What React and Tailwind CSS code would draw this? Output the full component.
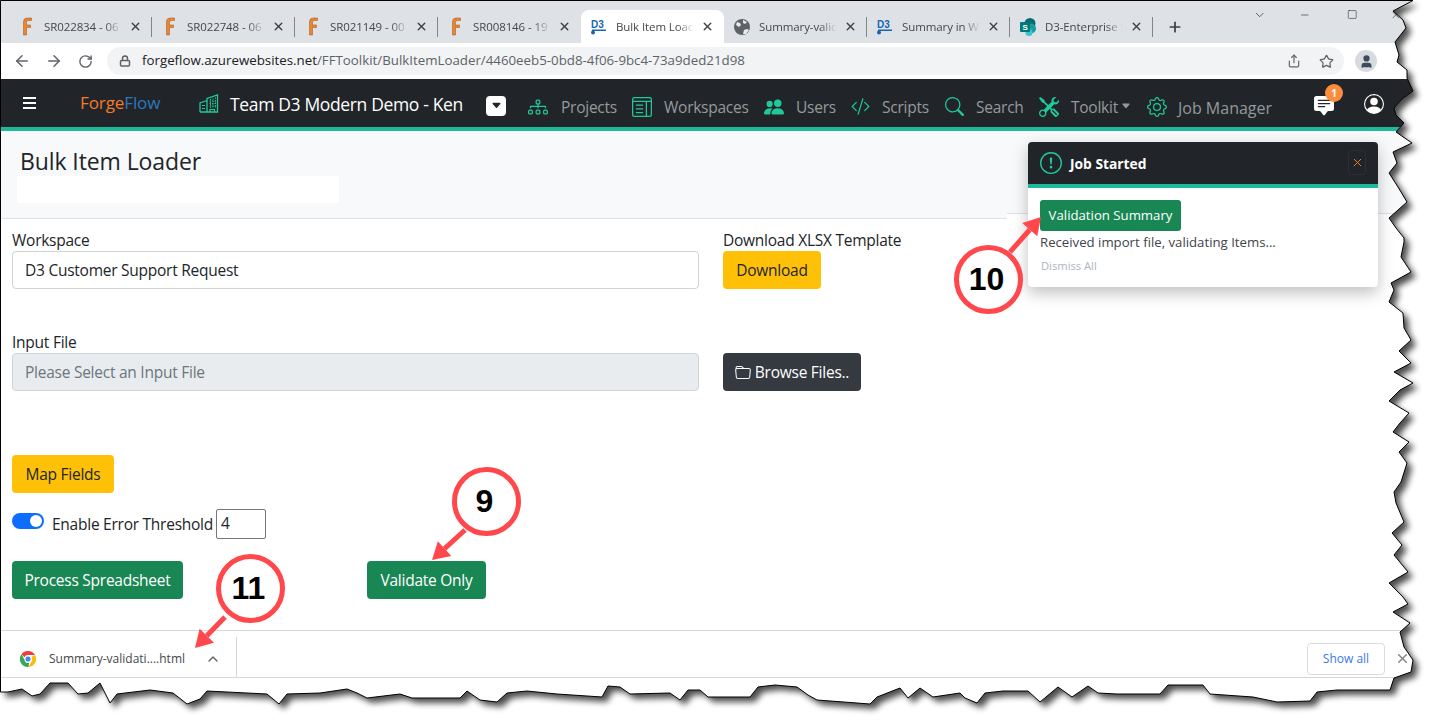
import { ArrowLeft, ArrowRight, RotateCw, Lock, Star, X, Plus, ChevronDown, ChevronUp, Minus, Square, Share, User } from "lucide-react";
import {
  BsCaretDownFill,
  BsChatSquareTextFill,
  BsCodeSlash,
  BsDiagram3,
  BsExclamationCircle,
  BsFolder,
  BsGear,
  BsLayoutTextWindow,
  BsPeopleFill,
  BsPersonCircle,
  BsSearch,
  BsTools,
} from "react-icons/bs";

const teal = "text-[#20c997]";

// torn paper edge of the screenshot, traced by hand
const edge =
  "0.5,0.5 1413,0.5 1393,11 1403,20 1406,28 1395,42 1399,55 1397,62 1407,70 1407,78 1413,91 1402,99 1394,108 1396,115 1404,123 1396,132 1412,143 1393,152 1397,163 1389,173 1398,187 1407,202 1389,218 1396,228 1404,238 1404,242 1401,257 1411,272 1391,283 1394,290 1389,302 1403,313 1404,328 1411,340 1399,351 1411,363 1394,372 1413,383 1400,390 1389,401 1409,413 1400,423 1393,432 1409,442 1399,452 1407,463 1401,482 1394,492 1396,503 1404,522 1392,533 1402,545 1394,555 1408,572 1389,583 1403,597 1408,604 1393,612 1410,623 1400,632 1404,647 1413,660 1411,672 1394,678 1390,690 1337,690 1317,692 1310,701 1277,702 1253,697 1210,694 1203,685 1168,685 1160,694 1117,694 1098,693 1088,686 1072,697 1058,687 1040,702 1028,691 1003,691 985,693 977,703 965,698 960,693 933,697 920,688 908,698 900,688 877,697 870,704 817,700 808,695 797,687 775,685 758,687 750,697 708,697 700,690 688,690 680,700 670,693 630,694 620,687 608,686 602,697 557,694 527,691 507,693 497,702 480,700 467,691 460,698 412,698 400,694 367,698 357,693 347,689 320,693 287,694 279,704 267,694 207,691 200,699 187,704 173,693 150,690 117,694 110,703 100,683 88,693 78,694 68,683 50,683 40,694 32,696 22,689 8,692 0.5,692";

function ForgeIcon() {
  return (
    <svg width="10" height="19" viewBox="0 0 10 19" className="shrink-0">
      <path d="M1.5 18V5Q1.5 1 5 1H9.5V3.5H6Q4.5 3.5 4.5 5.5V8H8.5V10.5H4.5V18Z" fill="#e8872f" stroke="#b0601f" strokeWidth="0.6" />
    </svg>
  );
}

function D3Icon() {
  return (
    <svg width="18" height="18" viewBox="0 0 18 18" className="shrink-0">
      <text x="1" y="10" fontSize="10" fontWeight="700" fontFamily="Liberation Sans" fill="#1667b0">D3</text>
      <rect x="2" y="11.5" width="14" height="1.5" fill="#1667b0" />
      <circle cx="3" cy="14.5" r="2" fill="#1667b0" />
    </svg>
  );
}

function GlobeIcon() {
  return (
    <svg width="16" height="16" viewBox="0 0 16 16" className="shrink-0">
      <circle cx="8" cy="8" r="8" fill="#5f6368" />
      <path d="M3 3l3 1 1 2-2 2-3-2zM9 15l1-4 3-1 2 1-3 4zM9 1l4 2-2 2-2-1z" fill="#e8eaed" />
    </svg>
  );
}

function SharePointIcon() {
  return (
    <svg width="17" height="18" viewBox="0 0 17 18" className="shrink-0">
      <circle cx="10" cy="5.5" r="5.5" fill="#036c70" />
      <circle cx="11" cy="10.5" r="5" fill="#1a9ba1" />
      <circle cx="9" cy="14.5" r="3.5" fill="#37c6d0" />
      <rect x="0" y="4" width="10" height="10" rx="1" fill="#03787c" />
      <text x="2.6" y="12" fontSize="8" fontWeight="700" fontFamily="Liberation Sans" fill="#fff">S</text>
    </svg>
  );
}

function ChromeIcon() {
  return (
    <svg width="16" height="16" viewBox="0 0 16 16">
      <path d="M8 0a8 8 0 0 1 7 4H8a4 4 0 0 0-3.6 2.3L1.5 3.2A8 8 0 0 1 8 0Z" fill="#ea4335" />
      <path d="M15 4a8 8 0 0 1-6.5 12l3-5.5A4 4 0 0 0 11.5 6Z" fill="#fbbc04" />
      <path d="M8.5 16A8 8 0 0 1 1.5 3.2l3 5.5A4 4 0 0 0 9 12Z" fill="#34a853" />
      <circle cx="8" cy="8" r="3" fill="#4285f4" stroke="#fff" strokeWidth="0.8" />
    </svg>
  );
}

function BuildingIcon() {
  return (
    <svg width="20" height="19" viewBox="0 0 20 19" fill="none" stroke="#20c997" className="shrink-0">
      <path d="M1 18V9L8 6.5M8 18V4.5L18.5 1V18H1" strokeWidth="1.3" />
      <path d="M10.5 7H17M10.5 9.5H17M10.5 12H17M11.5 5V14M14 4.5V14M16.5 3.5V14" strokeWidth="1" strokeDasharray="1.4 1.1" />
      <path d="M11 18V15.5H15.5V18" strokeWidth="1.2" />
      <path d="M3 11.5H6M3 14.5H6" strokeWidth="1.2" />
    </svg>
  );
}

const tabs = [
  { icon: <ForgeIcon />, title: "SR022834 - 06" },
  { icon: <ForgeIcon />, title: "SR022748 - 06" },
  { icon: <ForgeIcon />, title: "SR021149 - 00" },
  { icon: <ForgeIcon />, title: "SR008146 - 19" },
  { icon: <D3Icon />, title: "Bulk Item Load", active: true },
  { icon: <GlobeIcon />, title: "Summary-valid" },
  { icon: <D3Icon />, title: "Summary in We" },
  { icon: <SharePointIcon />, title: "D3-Enterprise S" },
];

function TabStrip() {
  return (
    <div className="h-[43px] bg-[#dee1e6] border-t border-black flex items-end pl-[9px]">
      {tabs.map((tab, i) => (
        <div
          key={tab.title}
          className={`w-[143px] h-[33px] flex items-center relative ${
            tab.active ? "bg-white rounded-t-lg" : ""
          }`}
        >
          <span className="w-[35px] flex justify-center pl-[1px] shrink-0">{tab.icon}</span>
          <span className="w-[78px] overflow-hidden whitespace-nowrap text-[11.5px] tracking-[-0.1px] text-[#45474a] [mask-image:linear-gradient(to_right,black_78%,transparent)]">
            {tab.title}
          </span>
          <X size={13} strokeWidth={2.6} className="ml-[7px] text-[#3c4043]" />
          {!tab.active && i !== 3 && <span className="absolute right-0 top-[7px] h-[20px] w-px bg-[#82858a]" />}
        </div>
      ))}
      <div className="h-[33px] flex items-center ml-[14px]">
        <Plus size={16} strokeWidth={2.6} className="text-[#3c4043]" />
      </div>
      <div className="ml-[69px] h-[33px] w-[150px] flex items-start -translate-y-[7px] text-[#202124]">
        <ChevronDown size={14} strokeWidth={1.2} className="ml-[1px] mt-[5px]" />
        <Minus size={12} strokeWidth={1.2} className="ml-[33px] mt-[6px]" />
        <Square size={11} strokeWidth={1.2} className="ml-[36px] mt-[6px]" />
        <X size={12} strokeWidth={1.2} className="ml-[33px] mt-[6px]" />
      </div>
    </div>
  );
}

function Toolbar() {
  return (
    <div className="h-[36px] bg-white flex items-center text-[#5f6368]">
      <ArrowLeft size={18} strokeWidth={2} className="ml-[13px]" />
      <ArrowRight size={18} strokeWidth={2} className="ml-[14px]" />
      <RotateCw size={15} strokeWidth={2.2} className="ml-[15px]" />
      <div className="ml-[14px] w-[1237px] h-[28px] rounded-full bg-[#f1f3f4] flex items-center pl-[11px] pr-[10px]">
        <Lock size={12} strokeWidth={3} className="ml-[1px]" />
        <span className="ml-[11px] text-[13.3px] text-[#202124] whitespace-nowrap">
          forgeflow.azurewebsites.net<span className="text-[#5f6368]">/FFToolkit/BulkItemLoader/4460eeb5-0bd8-4f06-9bc4-73a9ded21d98</span>
        </span>
        <Share size={14} className="ml-auto mr-[2px]" />
        <Star size={15} className="ml-[16px]" />
      </div>
      <div className="ml-[11px] w-[22px] h-[22px] rounded-full bg-[#d7dbe0] flex items-center justify-center text-[#3d4a5c]">
        <User size={15} fill="currentColor" />
      </div>
    </div>
  );
}

function NavItem({ icon, label, gap, left, caret, text = "text-[15.5px] tracking-[-0.25px]" }) {
  return (
    <div className={`flex items-center text-[#96999c] pt-[9px] ${text} ${left}`}>
      <span className={`${teal} ${gap} -mt-[2px]`}>{icon}</span>
      {label}
      {caret && <BsCaretDownFill size={10} className="ml-[3px] mb-[3px]" />}
    </div>
  );
}

function Navbar() {
  return (
    <div className="h-[52px] bg-[#212529] border-b-4 border-[#1eb89a] flex items-center">
      <div className="ml-[23px] w-[13px] flex flex-col gap-[3px]">
        <span className="h-[2px] bg-white" />
        <span className="h-[2px] bg-white" />
        <span className="h-[2px] bg-white" />
      </div>
      <span className="ml-[44px] w-[80px] text-[17px] tracking-[-0.1px] text-[#f47b2b]">
        Forge<span className="text-[#2f77bc]">Flow</span>
      </span>
      <span className="ml-[39px]"><BuildingIcon /></span>
      <span className="ml-[11px] pt-[3px] text-[17.5px] tracking-[-0.35px] text-white whitespace-nowrap w-[256px]">Team D3 Modern Demo - Ken</span>
      <div className="mt-[5px] w-[20px] h-[20px] rounded-sm bg-white flex items-center justify-center text-[#212529]">
        <BsCaretDownFill size={11} />
      </div>
      <NavItem icon={<BsDiagram3 size={20} />} label="Projects" left="ml-[22px] w-[104px]" gap="mr-[13px]" />
      <NavItem icon={<BsLayoutTextWindow size={20} />} label="Workspaces" left="w-[132px]" gap="mr-[12px]" />
      <NavItem icon={<BsPeopleFill size={20} />} label="Users" left="w-[87px]" gap="mr-[12px]" />
      <NavItem icon={<BsCodeSlash size={19} />} label="Scripts" left="w-[94px]" gap="mr-[12px]" />
      <NavItem icon={<BsSearch size={19} />} label="Search" left="w-[94px]" gap="mr-[12px]" />
      <NavItem icon={<BsTools size={20} />} label="Toolkit" left="w-[108px]" gap="mr-[12px]" caret />
      <NavItem icon={<BsGear size={20} />} label="Job Manager" left="w-[168px]" gap="mr-[11px]" text="text-[16px]" />
      <div className="relative text-white">
        <BsChatSquareTextFill size={20} className="mt-[6px] -ml-[1px]" />
        <span className="absolute -top-[6px] left-[10px] w-[18px] h-[18px] rounded-full bg-[#fd8c3d] text-[10px] font-bold flex items-center justify-center">1</span>
      </div>
      <BsPersonCircle size={20} className="ml-[30px] mt-[1px] text-white" />
    </div>
  );
}

function Toast() {
  return (
    <div className="absolute left-[1028px] top-[142px] w-[350px] h-[145px] bg-white rounded shadow-[0_6px_16px_rgba(0,0,0,0.25)]">
      <div className="h-[46px] bg-[#212529] border-b-4 border-[#1eb89a] rounded-t flex items-center pl-[12px] pr-[12px]">
        <BsExclamationCircle size={22} className={teal} />
        <span className="ml-[8px] pt-[3px] text-[13.8px] font-bold text-white">Job Started</span>
        <span className="ml-auto w-[18px] h-[25px] mb-[2px] border border-[#2c3036] rounded flex items-center justify-center">
          <X size={13} strokeWidth={1.8} className="text-[#f47b2b]" />
        </span>
      </div>
      <div className="px-[12px] pt-[12px]">
        <div className="w-[141px] h-[31px] pt-[1px] bg-[#198754] rounded-[3px] text-white text-[13.2px] flex items-center justify-center">Validation Summary</div>
        <div className="mt-[2px] text-[13.2px] leading-[18px] text-[#3f4448]">Received import file, validating Items...</div>
        <div className="mt-[8px] ml-px text-[11.2px] leading-[14px] text-[#adb5bd]">Dismiss All</div>
      </div>
    </div>
  );
}

function Btn({ className, children }) {
  return (
    <div className={`h-[38px] pt-[2px] rounded flex items-center justify-center ${className}`}>{children}</div>
  );
}

function Form() {
  return (
    <div className="h-[411px] px-[12px] text-[#212529] text-[15.5px] tracking-[-0.25px]">
      <div className="flex gap-[24px] pt-[11px]">
        <div className="w-[687px]">
          <div className="h-[21px] leading-[21px]">Workspace</div>
          <div className="h-[38px] pt-[2px] border border-[#ced4da] rounded flex items-center pl-[12px]">D3 Customer Support Request</div>
        </div>
        <div>
          <div className="h-[21px] leading-[21px]">Download XLSX Template</div>
          <Btn className="w-[98px] bg-[#ffc107]">Download</Btn>
        </div>
      </div>
      <div className="flex gap-[24px] mt-[43px]">
        <div className="w-[687px]">
          <div className="h-[21px] leading-[21px]">Input File</div>
          <div className="h-[38px] pt-[2px] border border-[#ced4da] rounded bg-[#e9ecef] text-[#6c757d] flex items-center pl-[12px]">Please Select an Input File</div>
        </div>
        <Btn className="mt-[21px] w-[138px] bg-[#343a40] text-white gap-[4px]">
          <BsFolder size={16} />
          Browse Files..
        </Btn>
      </div>
      <Btn className="mt-[64px] w-[102px] bg-[#ffc107]">Map Fields</Btn>
      <div className="mt-[16px] h-[30px] flex items-center">
        <div className="w-[32px] h-[16px] mb-[6px] rounded-full bg-[#0d6efd] flex items-center justify-end pr-[2px]">
          <span className="w-[12px] h-[12px] rounded-full bg-white" />
        </div>
        <span className="ml-[8px] pt-[2px] w-[164px] whitespace-nowrap">Enable Error Threshold</span>
        <div className="w-[50px] h-[30px] border border-[#767676] rounded-[2px] flex items-center pl-[4px]">4</div>
      </div>
      <div className="flex mt-[22px]">
        <Btn className="w-[171px] bg-[#198754] text-white">Process Spreadsheet</Btn>
        <Btn className="ml-[184px] w-[119px] bg-[#198754] text-white">Validate Only</Btn>
      </div>
    </div>
  );
}

function DownloadBar() {
  return (
    <div className="h-[48px] border-y border-[#d6d6d6] pt-[9px] flex items-center relative">
      <span className="ml-[20px]"><ChromeIcon /></span>
      <span className="ml-[13px] text-[12px] text-[#45474a] w-[156px] whitespace-nowrap">Summary-validati....html</span>
      <ChevronUp size={16} strokeWidth={2} className="text-[#5f6368]" />
      <span className="absolute left-[236px] top-[6px] bottom-0 w-px bg-[#d6d6d6]" />
      <div className="ml-auto mr-[51px] w-[78px] h-[32px] border border-[#dadce0] rounded text-[12px] font-medium text-[#3b78e7] flex items-center justify-center">Show all</div>
      <X size={15} strokeWidth={2.4} className="absolute left-[1395px] top-[20px] text-[#80868b]" />
    </div>
  );
}

function Callout({ cx, cy, label }) {
  return (
    <div
      className="absolute w-[69px] h-[69px] rounded-full border-[5px] border-[#ff474c] bg-white flex items-center justify-center font-bold text-black text-[32px] pr-[3px]"
      style={{ left: cx - 34.5, top: cy - 34.5, fontFamily: "Liberation Sans" }}
    >
      {label}
    </div>
  );
}

function Arrow({ x1, y1, x2, y2 }) {
  const a = Math.atan2(y2 - y1, x2 - x1);
  const bx = x2 - Math.cos(a) * 17;
  const by = y2 - Math.sin(a) * 17;
  const px = Math.sin(a) * 10;
  const py = -Math.cos(a) * 10;
  return (
    <g>
      <line x1={x1} y1={y1} x2={bx} y2={by} stroke="#ff474c" strokeWidth="5" />
      <polygon points={`${x2},${y2} ${bx + px},${by + py} ${bx - px},${by - py}`} fill="#ff474c" />
    </g>
  );
}

export default function App() {
  return (
    <div className="relative w-[1436px] h-[728px] overflow-hidden bg-white" style={{ fontFamily: '"Open Sans", sans-serif' }}>
      <TabStrip />
      <Toolbar />
      <Navbar />
      <div className="h-[88px] flex items-start">
        <div className="w-[1007px] h-[88px] bg-[#f8f9fa] border-b border-[#dee2e6] pt-[15px] pl-[20px]">
          <h1 className="text-[23px] tracking-[-0.1px] leading-[30px] text-[#212529]">Bulk Item Loader</h1>
          <div className="w-[322px] h-[27px] bg-white -ml-[3px]" />
        </div>
        <div className="flex-1 h-[83px] bg-[#f8f9fa] border-b border-[#dee2e6]" />
      </div>
      <Form />
      <DownloadBar />
      <Toast />

      {/* window edge */}
      <svg className="absolute inset-0 pointer-events-none" width="1436" height="728">
        <defs>
          <clipPath id="outside">
            <path clipRule="evenodd" d={`M0 0H1436V728H0Z M${edge.replace(/ /g, " L")}Z`} />
          </clipPath>
          <filter id="soft" x="-5%" y="-5%" width="110%" height="110%">
            <feGaussianBlur stdDeviation="3" />
          </filter>
        </defs>
        <path fillRule="evenodd" fill="#fff" d={`M0 0H1436V728H0Z M${edge.replace(/ /g, " L")}Z`} />
        <g clipPath="url(#outside)">
          <polygon points={edge} transform="translate(5 5)" fill="#000" opacity="0.7" filter="url(#soft)" />
        </g>
        <polygon points={edge} fill="none" stroke="#000" strokeWidth="1" />
        <Arrow x1={465} y1={530} x2={432} y2={560} />
        <Arrow x1={225} y1={617} x2={195} y2={648} />
        <Arrow x1={1010} y1={252} x2={1041} y2={217} />
      </svg>
      <Callout cx={486} cy={501} label="9" />
      <Callout cx={250} cy={588} label="11" />
      <Callout cx={988} cy={279} label="10" />
    </div>
  );
}
